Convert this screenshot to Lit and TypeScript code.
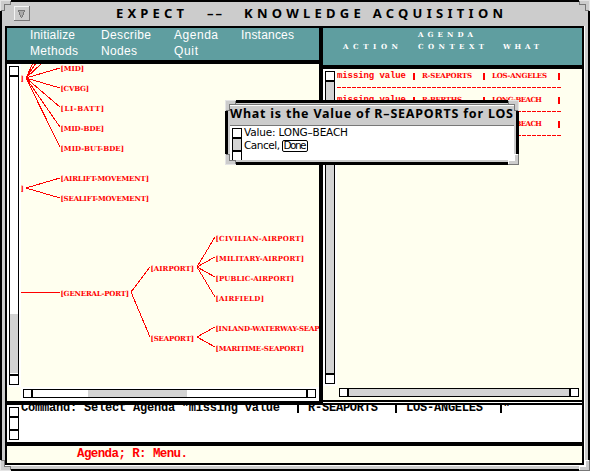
import { LitElement, html, svg, css } from "lit";
import { customElement, property } from "lit/decorators.js";

/** Spreads its text over a given width by adjusting the tracking. */
@customElement("fitted-text")
class FittedText extends LitElement {
  @property({ type: Number }) w = 0;
  @property() text = "";
  static styles = css`
    :host { display: block; white-space: pre; overflow: visible; }
    .t { display: inline-block; }
  `;
  render() { return html`<span class="t">${this.text}</span>`; }
  updated() {
    const s = this.renderRoot.querySelector(".t") as HTMLElement;
    s.style.letterSpacing = "0px";
    const natural = s.getBoundingClientRect().width;
    s.style.letterSpacing = (this.w - natural) / Math.max(1, this.text.length - 1) + "px";
  }
}

const NODES: [string, number, number][] = [
  ["]", 21, 81], ["[MID]", 61, 71], ["[CVBG]", 61, 91], ["[LI-BATT]", 61, 111],
  ["[MID-BDE]", 61, 131], ["[MID-BUT-BDE]", 61, 151], ["]", 21, 191],
  ["[AIRLIFT-MOVEMENT]", 61, 181], ["[SEALIFT-MOVEMENT]", 61, 201],
  ["[GENERAL-PORT]", 61, 296], ["[AIRPORT]", 151, 271], ["[SEAPORT]", 151, 341],
  ["[CIVILIAN-AIRPORT]", 216, 241], ["[MILITARY-AIRPORT]", 216, 261],
  ["[PUBLIC-AIRPORT]", 216, 281], ["[AIRFIELD]", 216, 301],
  ["[INLAND-WATERWAY-SEAPORT]", 216, 331], ["[MARITIME-SEAPORT]", 216, 351],
];

const EDGES: [number, number, number, number][] = [
  [26, 78, 33, 63], [26, 78, 36, 63], [26, 78, 42, 63],
  [26, 78, 60, 68], [26, 78, 60, 88], [26, 78, 60, 107], [26, 78, 60, 127], [26, 78, 60, 147],
  [26, 188, 60, 178], [26, 188, 60, 198], [21, 292.5, 60, 292.5],
  [131, 292, 150, 267], [131, 292, 150, 337],
  [197, 267, 215, 237], [197, 267, 215, 257], [197, 267, 215, 277], [197, 267, 215, 297],
  [197, 337, 215, 327], [197, 337, 215, 347],
];

const ROWS = [
  ["missing value", "R-SEAPORTS", "LOS-ANGELES"],
  ["missing value", "R-BERTHS", "LONG-BEACH"],
  ["missing value", "R-BERTHS", "LONG-BEACH"],
];

const grip = (cls: string) => {
  const lit = cls !== "br";
  return html`<svg class="grip ${cls}" viewBox="0 0 11 11">
    <path d="M0 0H11V5H5V11H0Z" fill="#ccc"/>
    <path d="M0 0H11V1H1V11H0Z" fill=${lit ? "#e4e4e4" : "#777"}/>
    <path d="M10 1H11V5H5V11H1V10H4V4H10Z" fill=${lit ? "#777" : "#fff"}/>
  </svg>`;
};

@customElement("app-root")
class AppRoot extends LitElement {
  static styles = css`
    :host { display: block; width: 590px; height: 471px; }
    * { box-sizing: border-box; }
    .window { position: relative; width: 590px; height: 471px; padding: 2px; background: #000; overflow: hidden; }
    .frame { height: 467px; width: 586px; background: #ccc; padding: 0 4px 4px 3px; display: grid; grid-template-rows: 24px 1fr; }
    .titlebar { display: flex; align-items: center; font: bold 13px/22px "Noto Sans", sans-serif; color: #000; padding-bottom: 2px; }
    .winbtn { width: 16px; height: 15px; margin: 1px 86px 0 9px; flex: none; }
    .titlebar .dash { margin-left: 22px; margin-right: 22px; width: 15px; }
    .t1 { width: 69px; }
    .body { background: #000; padding: 2px; display: grid; grid-template-rows: 373px 37px 17px; row-gap: 4px; border-bottom: 1px solid #fff; box-shadow: 1px 0 #fff; }
    .panes { display: grid; grid-template-columns: 312px 259px; column-gap: 4px; }
    .left { display: grid; grid-template-rows: 32px 337px; row-gap: 4px; }
    .menu { background: #5f9ea0; color: #fff; display: grid; grid-template-columns: 71px 73px 67px 70px; padding: 0 0 0 23px; grid-auto-rows: 16px; font: 12px/15px "Liberation Sans", Arial, sans-serif; }
    .lbody { background: #ffffef; display: grid; grid-template: 323px 14px / 14px 298px; }
    .gutter { background: #fff; padding: 2px 0 0 2px; }
    .under { background: #fff; padding: 2px 0 0 2px; }
    .tree { display: block; width: 298px; height: 323px; overflow: hidden; font: bold 7px "DejaVu Serif", serif; fill: #f00; }
    .edges { stroke: #f00; stroke-width: 1; shape-rendering: crispEdges; }
    .bar { border: 1px solid #000; background: #fff; display: flex; justify-content: space-between; }
    .bar.v { width: 10px; flex-direction: column; }
    .bar.h { height: 9px; }
    .cap { flex: none; }
    .v .cap.a { border-bottom: 2px solid #000; height: 10px; }
    .v .cap.z { border-top: 2px solid #000; height: 10px; }
    .h .cap.a { border-right: 2px solid #000; width: 9px; }
    .h .cap.z { border-left: 2px solid #000; width: 9px; }
    .bar.lv { height: 319px; }
    .bar.lh { width: 293px; }
    .bar.rv { height: 313px; background: #d3d3d3; }
    .bar.rh { width: 240px; background: #d3d3d3; }
    .rv .cap, .rh .cap { background: #fff; }
    .lv .thumb { height: 59px; background: #d3d3d3; margin-top: auto; margin-bottom: 1px; }
    .lh .thumb { width: 99px; background: #d3d3d3; margin-right: auto; margin-left: 55px; }
    .right { display: grid; grid-template-rows: 37px 331px; row-gap: 4px; align-content: start; }
    .right::after { content: ""; height: 1px; margin-top: -2px; background: #fff; }
    .heads { background: #5f9ea0; color: #fff; font: bold 7px/12px "DejaVu Serif", serif; display: grid; grid-template: 12px 12px / 75px 85px 60px; padding: 1px 0 0 20px; }
    .rbody { background: #ffffef; display: grid; grid-template: 317px 14px / 14px 245px; }
    .rbody .under { background: none; }
    .agenda { overflow: hidden; color: #f00; font: bold 7px/12px "DejaVu Serif", serif; }
    .kind { font: bold 9px/12px "Liberation Mono", monospace; }
    .row { display: grid; grid-template-columns: 76px 9px 61px 9px 66px 4px; height: 12px; align-items: center; padding-top: 1px; }
    .pipe { width: 2px; height: 7px; background: #f00; }
    .rule { height: 12px; display: flex; align-items: center; }
    .dashes { width: 224px; height: 1px; background: repeating-linear-gradient(90deg, #f00 0 4px, transparent 4px 5px); }
    .command { background: #fff; display: grid; grid-template-columns: 14px 1fr; overflow: hidden; color: #000; }
    .bar.cv { height: 33px; }
    .cv .mid { height: 11px; }
    .cmd { margin-top: -3px; height: 13px; display: grid; grid-template-columns: 276px 11px 87px 11px 94px 3px 10px; font: bold 12px/13px "Liberation Mono", monospace; }
    .cpipe { width: 2px; height: 11px; background: #000; }
    .status { background: #ffffef; color: #f00; font: bold 12.5px/16px "Liberation Mono", monospace; padding-left: 70px; }
    .grip { position: absolute; width: 11px; height: 11px; shape-rendering: crispEdges; }
    .tl { left: 0; top: 0; }
    .tr { right: 0; top: 0; transform: scaleX(-1); }
    .bl { left: 0; bottom: 0; transform: scaleY(-1); }
    .br { right: 0; bottom: 0; transform: scale(-1); }
    .dialog { position: absolute; left: 225px; top: 100px; width: 294px; height: 65px; background: #000; padding: 3px; }
    .dframe { height: 59px; background: #ccc; padding: 1px 2px 2px; display: grid; grid-template-rows: 22px 34px; }
    .dtitle { border-top: 1px solid #777; border-bottom: 1px solid #777; font: bold 12.5px/17px "Noto Sans", sans-serif; overflow: hidden; color: #000; box-shadow: inset 0 1px #fff; }
    .dbody { background: #fff; display: grid; grid-template-columns: 14px 1fr; padding: 2px 0 0 2px; color: #000; font: 10.5px/13px "DejaVu Sans", sans-serif; }
    .bar.dv { height: 32px; border-bottom: 0; }
    .dv .mid { flex: 1; background: #d3d3d3; }
    .dtext { margin-left: -2px; margin-top: -2px; }
    .line { display: flex; height: 13px; align-items: center; }
    .done { border: 1px solid #000; border-radius: 2px; height: 12px; width: 26px; line-height: 9px; padding-left: 1px; margin-left: 2px; }
  `;

  render() {
    return html`<div class="window">
      <div class="frame">
        <div class="titlebar">
          <svg class="winbtn" viewBox="0 0 16 15" shape-rendering="crispEdges">
            <rect width="16" height="15" fill="#777"/><rect width="15" height="14" fill="#f4f4f4"/><rect x="1" y="1" width="14" height="13" fill="#ccc"/>
            <path d="M4 4H11L8 11H7Z" fill="#aaa" stroke="#777"/>
          </svg>
          <fitted-text class="t1" w="68" text="EXPECT"></fitted-text>
          <fitted-text class="dash" w="15" text="––"></fitted-text>
          <fitted-text w="259" text="KNOWLEDGE ACQUISITION"></fitted-text>
        </div>
        <div class="body">
          <div class="panes">
            <div class="left">
              <div class="menu">
                <fitted-text w="45" text="Initialize"></fitted-text><fitted-text w="50" text="Describe"></fitted-text>
                <fitted-text w="44" text="Agenda"></fitted-text><fitted-text w="53" text="Instances"></fitted-text>
                <fitted-text w="48" text="Methods"></fitted-text><fitted-text w="36" text="Nodes"></fitted-text>
                <fitted-text w="24" text="Quit"></fitted-text>
              </div>
              <div class="lbody">
                <div class="gutter"><div class="bar v lv"><i class="cap a"></i><i class="thumb"></i><i class="cap z"></i></div></div>
                <svg class="tree" viewBox="21 64 298 323">
                  <g class="edges">${EDGES.map(([a, b, c, d]) => svg`<line x1=${a} y1=${b} x2=${c} y2=${d}></line>`)}</g>
                  ${NODES.map(([t, x, y]) => svg`<text x=${x - 0.5} y=${y} textLength=${t.length > 1 ? t.length * 5 - 1.5 : 3}>${t}</text>`)}
                </svg>
                <div></div>
                <div class="under"><div class="bar h lh"><i class="cap a"></i><i class="thumb"></i><i class="cap z"></i></div></div>
              </div>
            </div>
            <div class="right">
              <div class="heads">
                <span></span><fitted-text w="55" text="AGENDA"></fitted-text><span></span>
                <fitted-text w="55" text="ACTION"></fitted-text><fitted-text w="66" text="CONTEXT"></fitted-text><fitted-text w="36" text="WHAT"></fitted-text>
              </div>
              <div class="rbody">
                <div class="gutter"><div class="bar v rv"><i class="cap a"></i><i class="cap z"></i></div></div>
                <div class="agenda">${ROWS.map(([a, b, c]) => html`
                  <div class="row"><fitted-text class="kind" w="69" text=${a}></fitted-text><i class="pipe"></i>
                    <fitted-text w=${b.length * 5} text=${b}></fitted-text><i class="pipe"></i>
                    <fitted-text w=${c.length * 5} text=${c}></fitted-text><i class="pipe"></i></div>
                  <div class="rule"><div class="dashes"></div></div>`)}</div>
                <div></div>
                <div class="under"><div class="bar h rh"><i class="cap a"></i><i class="cap z"></i></div></div>
              </div>
            </div>
          </div>
          <div class="command">
            <div class="gutter"><div class="bar v cv"><i class="cap a"></i><i class="mid"></i><i class="cap z"></i></div></div>
            <div class="cmd">
              <fitted-text w="259" text=${'Command: Select Agenda "missing value'}></fitted-text><i class="cpipe"></i>
              <fitted-text w="70" text="R-SEAPORTS"></fitted-text><i class="cpipe"></i>
              <fitted-text w="77" text="LOS-ANGELES"></fitted-text><i class="cpipe"></i>
              <fitted-text w="7" text=${'"'}></fitted-text>
            </div>
          </div>
          <div class="status"><fitted-text w="111" text="Agenda; R: Menu."></fitted-text></div>
        </div>
      </div>
      ${grip("tl")}${grip("tr")}${grip("bl")}${grip("br")}
      <div class="dialog">
        <div class="dframe">
          <div class="dtitle"><fitted-text w="283" text="What is the Value of R–SEAPORTS for LOS"></fitted-text></div>
          <div class="dbody">
            <div class="bar v dv"><i class="cap a"></i><i class="mid"></i><i class="cap z"></i></div>
            <div class="dtext">
              <div class="line"><fitted-text w="104" text="Value: LONG–BEACH"></fitted-text></div>
              <div class="line"><fitted-text w="36" text="Cancel,"></fitted-text><span class="done"><fitted-text w="23" text="Done"></fitted-text></span></div>
            </div>
          </div>
        </div>
        ${grip("tl")}${grip("tr")}${grip("bl")}${grip("br")}
      </div>
    </div>`;
  }
}
